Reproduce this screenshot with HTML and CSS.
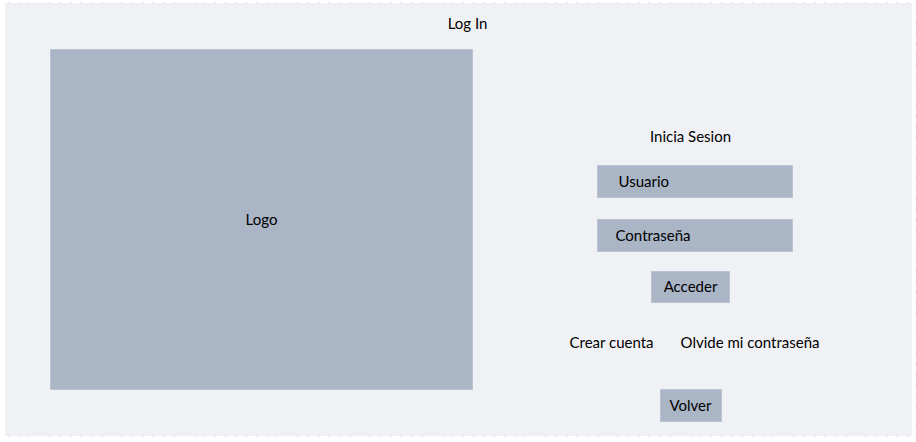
FILE: index.html
```html
<!DOCTYPE html>
<html lang="es">
<head>
  <meta charset="utf-8">
  <meta name="viewport" content="width=device-width, initial-scale=1">
  <title>Log In</title>
  <link rel="stylesheet" href="styles.css">
</head>
<body>
  <div class="canvas">
    <div class="screen">
      <header class="screen-header">
        <h1 class="title">Log In</h1>
      </header>
      <main class="content">
        <div class="logo">Logo</div>
        <form class="login">
          <h2 class="title heading">Inicia Sesion</h2>
          <input class="field user" type="text" placeholder="Usuario" aria-label="Usuario">
          <input class="field password" type="password" placeholder="Contraseña" aria-label="Contraseña">
          <button class="button enter" type="submit">Acceder</button>
          <nav class="links">
            <a class="link" href="#crear">Crear cuenta</a>
            <a class="link" href="#olvide">Olvide mi contraseña</a>
          </nav>
          <button class="button back" type="button">Volver</button>
        </form>
      </main>
    </div>
  </div>
</body>
</html>
```

FILE: styles.css
```css
* {
  box-sizing: border-box;
}

body {
  margin: 0;
  background: #ffffff;
  color: #000000;
  font: 15px/22px Lato, "Liberation Sans", sans-serif;
}

/* Dotted guides run along the top, bottom and right edges. */
.canvas {
  --dots: #e6e9ef 0 2px, transparent 2px 10px, #e6e9ef 10px 12px, transparent 12px 20px, #e6e9ef 20px 22px, transparent 22px 31px;
  display: flex;
  min-height: 100vh;
  padding: 3px 4px 6px 5px;
  background-image:
    repeating-linear-gradient(90deg, var(--dots)),
    repeating-linear-gradient(90deg, var(--dots)),
    repeating-linear-gradient(180deg, var(--dots));
  background-position: 8px 2px, 8px calc(100% - 5px), 100% 2px;
  background-size: 100% 1px, 100% 1px, 1px 100%;
  background-repeat: no-repeat;
}

.screen {
  flex: 1;
  background: #f0f1f5;
}

.screen-header {
  padding: 9px 0 15px 18px;
  text-align: center;
}

.title {
  margin: 0;
  font-size: 15px;
  font-weight: 400;
}

.content {
  display: grid;
  grid-template-columns: 423fr 435fr;
  column-gap: 4px;
  align-items: start;
  padding-left: 45px;
}

.logo,
.field,
.button {
  border: 1px solid #bac4d3;
  background: #aab5c6;
}

.logo {
  display: grid;
  place-items: center;
  min-height: 341px;
  padding-bottom: 2px;
}

.login {
  display: flex;
  flex-direction: column;
  align-items: center;
  padding-top: 76px;
}

.heading,
.button {
  margin-right: 8px;
}

.field,
.button {
  height: 33px;
  border-radius: 0;
  color: inherit;
  font: inherit;
}

.field {
  width: 196px;
}

.field::placeholder {
  color: inherit;
  opacity: 1;
}

.user {
  margin-top: 18px;
  padding: 0 21px 2px;
}

.password {
  margin-top: 21px;
  padding: 0 18px 2px;
}

.button {
  padding: 0 9px 2px;
}

.enter {
  height: 32px;
  margin-top: 19px;
  padding: 0 12px 2px;
}

.links {
  display: flex;
  gap: 27px;
  margin-top: 28px;
}

.link {
  color: inherit;
  text-decoration: none;
}

.back {
  margin-top: 36px;
}
```
